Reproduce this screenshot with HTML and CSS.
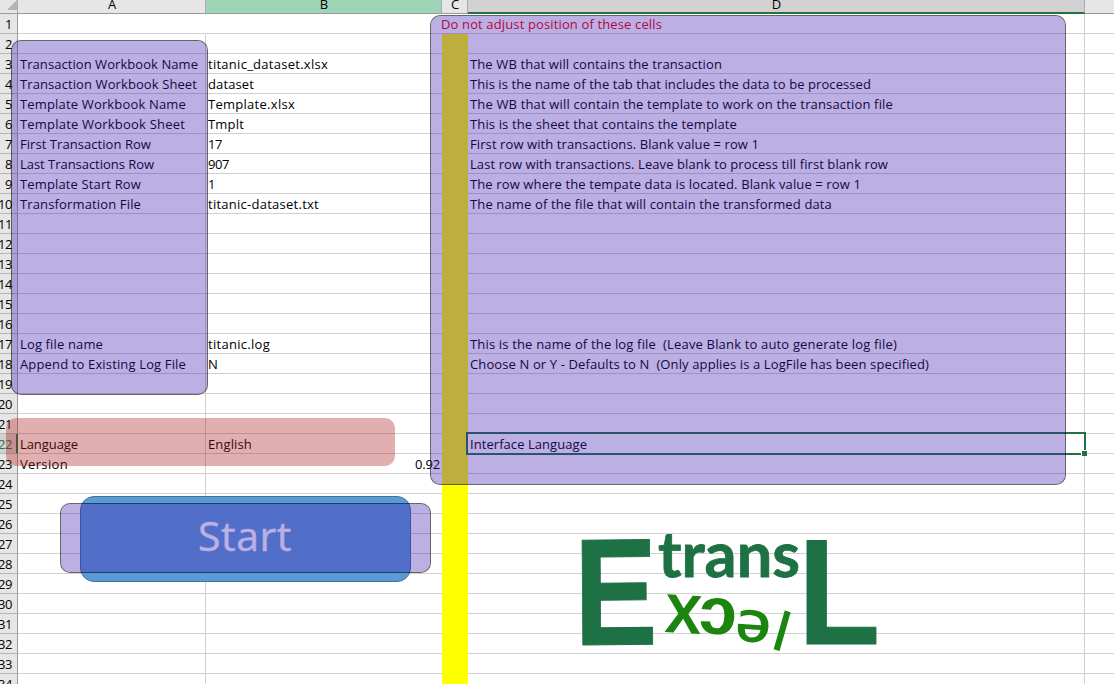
FILE: index.html
```
<!DOCTYPE html>
<html lang="en">
<head>
<meta charset="utf-8">
<title>EtransL</title>
<link rel="stylesheet" href="styles.css">
</head>
<body>
<main class="sheet">
  <div class="row head"><div class="n"><svg class="corner" viewBox="0 0 12 12"><path d="M12 0V12H0Z"/></svg></div><div class="a">A</div><div class="b">B</div><div class="c">C</div><div class="d">D</div><div class="e"></div></div>
  <div id="rows"></div>
  <div class="selection"><i></i></div>
  <div class="start"><span class="t" data-w="94">Start</span></div>
  <div class="shape labels"></div>
  <div class="shape notes"></div>
  <div class="shape action"></div>
  <div class="shape language"></div>
  <svg class="logo" viewBox="570 525 320 135">
    <g class="dark">
      <text class="slab" transform="translate(574.5 645) scale(.82 1) rotate(-.5)" font-size="152">E</text>
      <text class="trans" x="658" y="577" font-size="63" textLength="142" lengthAdjust="spacingAndGlyphs">trans</text>
      <text class="slab" transform="translate(798 643.5) scale(.89 1)" font-size="151">L</text>
    </g>
    <g class="bright">
      <text transform="translate(682.5 633) scale(.97 1) rotate(3)" font-size="70">x</text>
      <text transform="translate(717 634) scale(1.02 1) rotate(3)" font-size="67">ɔ</text>
      <text transform="translate(752 642) scale(1.1 1) rotate(4)" font-size="58">ə</text>
      <text transform="translate(776.5 650) rotate(16)" font-size="53">l</text>
    </g>
  </svg>
</main>
<script src="sheet.js"></script>
</body>
</html>
```
FILE: styles.css
```
*{box-sizing:border-box}
body{margin:0;background:#fff;font:13px/20px "Open Sans","Noto Sans",sans-serif;color:#000}
.sheet{position:relative;width:1114px;height:684px;overflow:hidden}
.row{display:grid;grid-template-columns:18px 188px 236px 26px 617px 29px;height:20px}
.row>div{border-right:1px solid #d0d0d0;border-bottom:1px solid #d0d0d0;white-space:pre;padding-left:2px;height:20px}
.row>.b,.row>.c{border-right:0}
.row>.c{background:#ff0;border:0}
.row>.e{border-right:0}
.row>.n{background:#e6e6e6;border-right-color:#999;border-bottom-color:#b5b5b5;padding:0 5px 0 0;display:flex;justify-content:flex-end;line-height:21px}
.row.first .a,.row.first .b{border-right-color:#fff}
.row.first .c{background:#fff;border-bottom:1px solid #d0d0d0;padding:0;color:#f00000}
.row.first .d{position:relative;z-index:-1}
.row.first .c .t{margin-left:-1px}
.row .num{text-align:right;padding-right:2px}
.row.current .n{background:#d2d2d2;color:#217346;border-right:2px solid #217346;padding-right:4px}
.row.head{height:14px}
.row.head>div{height:14px;overflow:hidden;background:#e6e6e6;border-right:1px solid #ababab;border-bottom:1px solid #999;text-align:center;line-height:8px;padding:0 0 0 1px}
.row.head>.b{background:#9fd5b7}
.row.head>.d{background:#d2d2d2;border-bottom:2px solid #217346}
.row.head>.e{border-right:0}
.corner{width:12px;height:12px;flex:none;margin:-2px -2px 0 0;fill:#b4b4b4}
.selection{position:absolute;left:466px;top:432px;width:620px;height:23px;border:2px solid #217346}
.selection i{position:absolute;right:-3px;bottom:-3px;width:5px;height:5px;background:#217346;box-shadow:-1px -1px 0 #fff}
.start{position:absolute;left:80px;top:496px;width:331px;height:86px;border:1px solid #41719c;border-radius:14px;background:#5b9bd5;color:#fff;font-size:41px;font-weight:500;-webkit-text-stroke:.4px #fff;line-height:77px;padding-left:117px}
.shape{position:absolute;border:1px solid rgba(0,0,0,.6);border-radius:10px;background:rgba(64,26,178,.35);background-clip:padding-box}
.labels{left:11px;top:40px;width:197px;height:355px}
.notes{left:430px;top:15px;width:636px;height:470px}
.action{left:60px;top:503px;width:371px;height:70px}
.language{left:6px;top:418px;width:389px;height:48px;border:0;background:rgba(168,26,26,.35)}
.logo{position:absolute;left:570px;top:525px;width:320px;height:135px}
.dark{fill:#1e7145}
.bright{fill:#1c8510;font-family:"Open Sans",sans-serif;font-weight:600;text-anchor:middle}
.slab{font-family:"Liberation Sans",sans-serif;font-weight:700;stroke:#1e7145;stroke-width:1;stroke-linejoin:round}
.trans{font-family:Lato,sans-serif;font-weight:700;stroke:#1e7145;stroke-width:.8}
```
FILE: sheet.js
```
const cells = {
  1: {c: ['Do not adjust position of these cells', 221]},
  3: {a: ['Transaction Workbook Name', 178], b: ['titanic_dataset.xlsx', 120], d: ['The WB that will contains the transaction', 252]},
  4: {a: ['Transaction Workbook Sheet', 177], b: ['dataset', 46], d: ['This is the name of the tab that includes the data to be processed', 401]},
  5: {a: ['Template Workbook Name', 166], b: ['Template.xlsx', 87], d: ['The WB that will contain the template to work on the transaction file', 423]},
  6: {a: ['Template Workbook Sheet', 165], b: ['Tmplt', 36], d: ['This is the sheet that contains the template', 267]},
  7: {a: ['First Transaction Row', 131], b: ['17', 14], d: ['First row with transactions. Blank value = row 1', 289]},
  8: {a: ['Last Transactions Row', 134], b: ['907', 21], d: ['Last row with transactions. Leave blank to process till first blank row', 418]},
  9: {a: ['Template Start Row', 121], b: ['1', 7], d: ['The row where the tempate data is located. Blank value = row 1', 391]},
  10: {a: ['Transformation File', 121], b: ['titanic-dataset.txt', 111], d: ['The name of the file that will contain the transformed data', 362]},
  17: {a: ['Log file name', 83], b: ['titanic.log', 62], d: ['This is the name of the log file  (Leave Blank to auto generate log file)', 427]},
  18: {a: ['Append to Existing Log File', 166], b: ['N', 10], d: ['Choose N or Y - Defaults to N  (Only applies is a LogFile has been specified)', 459]},
  22: {a: ['Language', 58], b: ['English', 44], d: ['Interface Language', 117]},
  23: {a: ['Version', 48], b: ['0.92', 25, 'num']}
};
const rows = document.getElementById('rows');
for (let r = 1; r <= 34; r++) {
  const row = document.createElement('div');
  row.className = 'row' + (r === 1 ? ' first' : '') + (r === 22 ? ' current' : '');
  for (const col of ['n', 'a', 'b', 'c', 'd', 'e']) {
    const cell = document.createElement('div');
    cell.className = col;
    const value = col === 'n' ? [String(r), r > 9 ? 14 : 7] : (cells[r] || {})[col];
    if (value) {
      const text = document.createElement('span');
      text.className = 't';
      text.dataset.w = value[1];
      text.textContent = value[0];
      if (value[2]) cell.classList.add(value[2]);
      cell.append(text);
    }
    row.append(cell);
  }
  rows.append(row);
}
// Fit each label to its column text width through letter spacing.
for (const t of document.querySelectorAll('.t')) {
  const gap = (t.dataset.w - t.getBoundingClientRect().width) / t.textContent.length;
  t.style.letterSpacing = gap + 'px';
}
```
